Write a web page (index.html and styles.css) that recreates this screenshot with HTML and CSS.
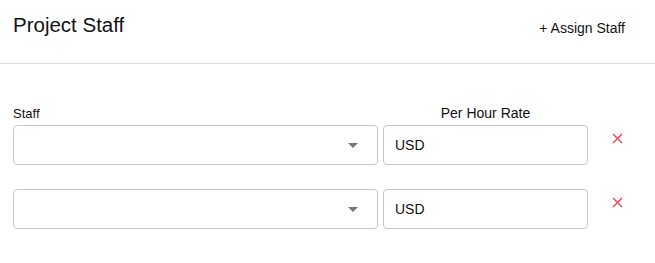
FILE: index.html
```html
<!DOCTYPE html>
<html>
<head>
<meta charset="utf-8">
<link rel="stylesheet" href="styles.css">
</head>
<body>
<div class="card">
  <div class="header">
    <h1 class="title">Project Staff</h1>
    <button class="assign">+ Assign Staff</button>
  </div>
  <div class="body">
    <div class="grid">
      <div class="label">Staff</div>
      <div class="label center wide">Per Hour Rate</div>
      <div></div>

      <div class="select"><span class="caret"></span></div>
      <div class="input">USD</div>
      <div class="remove"><svg width="11" height="11" viewBox="0 0 11 11"><path d="M1 1L10 10M10 1L1 10" stroke="#e0484d" stroke-width="1.4" fill="none"/></svg></div>

      <div class="select"><span class="caret"></span></div>
      <div class="input">USD</div>
      <div class="remove"><svg width="11" height="11" viewBox="0 0 11 11"><path d="M1 1L10 10M10 1L1 10" stroke="#e0484d" stroke-width="1.4" fill="none"/></svg></div>
    </div>
  </div>
</div>
</body>
</html>
```

FILE: styles.css
```css
* { box-sizing: border-box; }
html, body { margin: 0; padding: 0; background: #fff; }
body {
  font-family: "Liberation Sans", Arial, sans-serif;
  color: #111;
  width: 655px;
  height: 263px;
  overflow: hidden;
}
.header {
  height: 64px;
  border-bottom: 1px solid #dedede;
  display: flex;
  justify-content: space-between;
  align-items: flex-start;
  padding: 0 30px 0 13px;
}
.title {
  margin: 13px 0 0 0;
  font-size: 20.5px;
  font-weight: normal;
  line-height: 24px;
  color: #111;
}
.assign {
  margin-top: 20px;
  border: 0;
  background: none;
  padding: 0;
  font-family: inherit;
  font-size: 14px;
  line-height: 17px;
  color: #111;
}
.body {
  padding: 42px 0 0 13px;
}
.grid {
  display: grid;
  grid-template-columns: 365px 205px 60px;
  column-gap: 5px;
}
.label {
  font-size: 13px;
  line-height: 15px;
  height: 19px;
  color: #111;
}
.wide { font-size: 14px; }
.center { text-align: center; }
.select, .input {
  height: 40px;
  border: 1px solid #c6c6c6;
  border-radius: 4px;
  margin-bottom: 24px;
}
.select {
  display: flex;
  align-items: center;
  justify-content: flex-end;
  padding-right: 19px;
}
.caret {
  width: 0;
  height: 0;
  border-left: 5px solid transparent;
  border-right: 5px solid transparent;
  border-top: 5px solid #777;
}
.input {
  display: flex;
  align-items: center;
  padding-left: 11px;
  font-size: 14px;
  color: #111;
}
.remove {
  padding: 8px 0 0 19px;
  line-height: 0;
}
```
